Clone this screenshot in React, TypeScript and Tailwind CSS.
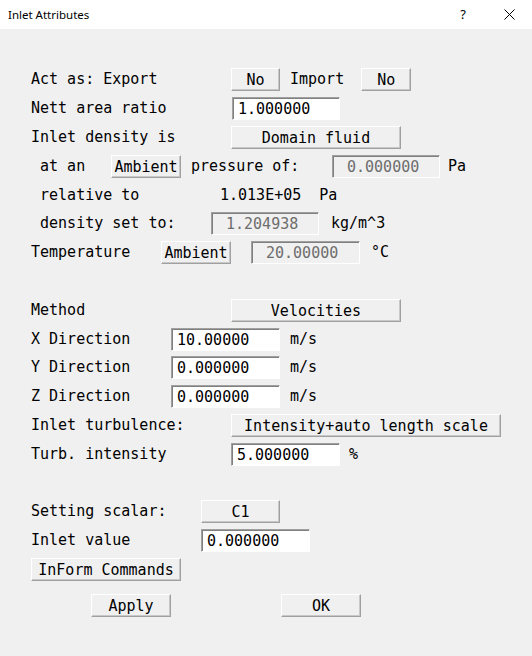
import React from "react";

const btn =
  "h-[23px] shrink-0 bg-[#f0f0f0] border border-t-white border-l-white border-b-[#a0a0a0] border-r-[#a0a0a0] shadow-[inset_-1px_-1px_0_#c8c8c8] text-center leading-[23px] whitespace-pre";
const inp =
  "h-[23px] shrink-0 bg-white border border-t-[#a0a0a0] border-l-[#a0a0a0] border-b-white border-r-white shadow-[inset_1px_1px_0_#808080] leading-[23px] pl-[5px] whitespace-pre";
const dis =
  "h-[23px] shrink-0 bg-[#f0f0f0] border border-t-[#a0a0a0] border-l-[#a0a0a0] border-b-white border-r-white shadow-[inset_1px_1px_0_#808080] leading-[23px] pl-[14px] whitespace-pre text-[#6d6d6d]";
const lbl = "shrink-0 pt-[2px] leading-[18px] whitespace-pre";

function Row({ h, children }: { h: string; children: React.ReactNode }) {
  return <div className={`flex items-start ${h}`}>{children}</div>;
}

export default function App() {
  return (
    <div className="w-[532px] h-[656px] bg-[#f0f0f0] flex flex-col overflow-hidden">
      <div className="h-[29px] bg-white flex items-center shrink-0">
        <span className="pl-[8px] text-[11.5px] text-black font-['Noto_Sans',sans-serif] flex-1">
          Inlet Attributes
        </span>
        <div className="w-[46px] h-[29px] flex items-center justify-center text-[13px] font-['Noto_Sans',sans-serif] text-black">
          ?
        </div>
        <div className="w-[46px] h-[29px] flex items-center justify-center">
          <svg width="11" height="11" viewBox="0 0 11 11">
            <path d="M0.5 0.5 L10.5 10.5 M10.5 0.5 L0.5 10.5" stroke="#000" strokeWidth="1" fill="none" />
          </svg>
        </div>
      </div>

      <div className="pt-[39px] pl-[31px] flex flex-col text-[15px] text-black font-[family-name:'DejaVu_Sans_Mono',monospace]">
        <Row h="h-[29px]">
          <span className={`${lbl} w-[200px]`}>Act as: Export</span>
          <div className={`${btn} w-[49px]`}>No</div>
          <span className={`${lbl} ml-[10px]`}>Import</span>
          <div className={`${btn} w-[50px] ml-[17px]`}>No</div>
        </Row>
        <Row h="h-[29px]">
          <span className={`${lbl} w-[201px]`}>Nett area ratio</span>
          <div className={`${inp} w-[108px]`}>1.000000</div>
        </Row>
        <Row h="h-[29px]">
          <span className={`${lbl} w-[200px]`}>Inlet density is</span>
          <div className={`${btn} w-[170px]`}>Domain fluid</div>
        </Row>
        <Row h="h-[29px]">
          <span className={`${lbl} w-[80px]`}> at an</span>
          <div className={`${btn} w-[70px]`}>Ambient</div>
          <span className={`${lbl} ml-[10px] w-[108px]`}>pressure of:</span>
          <div className={`${dis} w-[108px] ml-[33px]`}>0.000000</div>
          <span className={`${lbl} ml-[8px]`}>Pa</span>
        </Row>
        <Row h="h-[28px]">
          <span className={`${lbl} w-[189px]`}> relative to</span>
          <span className={lbl}>1.013E+05  Pa</span>
        </Row>
        <Row h="h-[29px]">
          <span className={`${lbl} w-[180px]`}> density set to:</span>
          <div className={`${dis} w-[108px]`}>1.204938</div>
          <span className={`${lbl} ml-[12px]`}>kg/m^3</span>
        </Row>
        <Row h="h-[58px]">
          <span className={`${lbl} w-[130px]`}>Temperature</span>
          <div className={`${btn} w-[70px]`}>Ambient</div>
          <div className={`${dis} w-[109px] ml-[20px]`}>20.00000</div>
          <span className={`${lbl} ml-[11px]`}>°C</span>
        </Row>
        <Row h="h-[29px]">
          <span className={`${lbl} w-[200px]`}>Method</span>
          <div className={`${btn} w-[170px]`}>Velocities</div>
        </Row>
        <Row h="h-[28px]">
          <span className={`${lbl} w-[140px]`}>X Direction</span>
          <div className={`${inp} w-[109px]`}>10.00000</div>
          <span className={`${lbl} ml-[10px]`}>m/s</span>
        </Row>
        <Row h="h-[29px]">
          <span className={`${lbl} w-[140px]`}>Y Direction</span>
          <div className={`${inp} w-[109px]`}>0.000000</div>
          <span className={`${lbl} ml-[10px]`}>m/s</span>
        </Row>
        <Row h="h-[29px]">
          <span className={`${lbl} w-[140px]`}>Z Direction</span>
          <div className={`${inp} w-[109px]`}>0.000000</div>
          <span className={`${lbl} ml-[10px]`}>m/s</span>
        </Row>
        <Row h="h-[29px]">
          <span className={`${lbl} w-[200px]`}>Inlet turbulence:</span>
          <div className={`${btn} w-[270px]`}>Intensity+auto length scale</div>
        </Row>
        <Row h="h-[57px]">
          <span className={`${lbl} w-[200px]`}>Turb. intensity</span>
          <div className={`${inp} w-[109px]`}>5.000000</div>
          <span className={`${lbl} ml-[9px]`}>%</span>
        </Row>
        <Row h="h-[29px]">
          <span className={`${lbl} w-[170px]`}>Setting scalar:</span>
          <div className={`${btn} w-[79px]`}>C1</div>
        </Row>
        <Row h="h-[29px]">
          <span className={`${lbl} w-[170px]`}>Inlet value</span>
          <div className={`${inp} w-[109px]`}>0.000000</div>
        </Row>
        <Row h="h-[36px]">
          <div className={`${btn} w-[150px]`}>InForm Commands</div>
        </Row>
        <Row h="h-[29px]">
          <div className={`${btn} w-[80px] ml-[60px]`}>Apply</div>
          <div className={`${btn} w-[80px] ml-[110px]`}>OK</div>
        </Row>
      </div>
    </div>
  );
}
